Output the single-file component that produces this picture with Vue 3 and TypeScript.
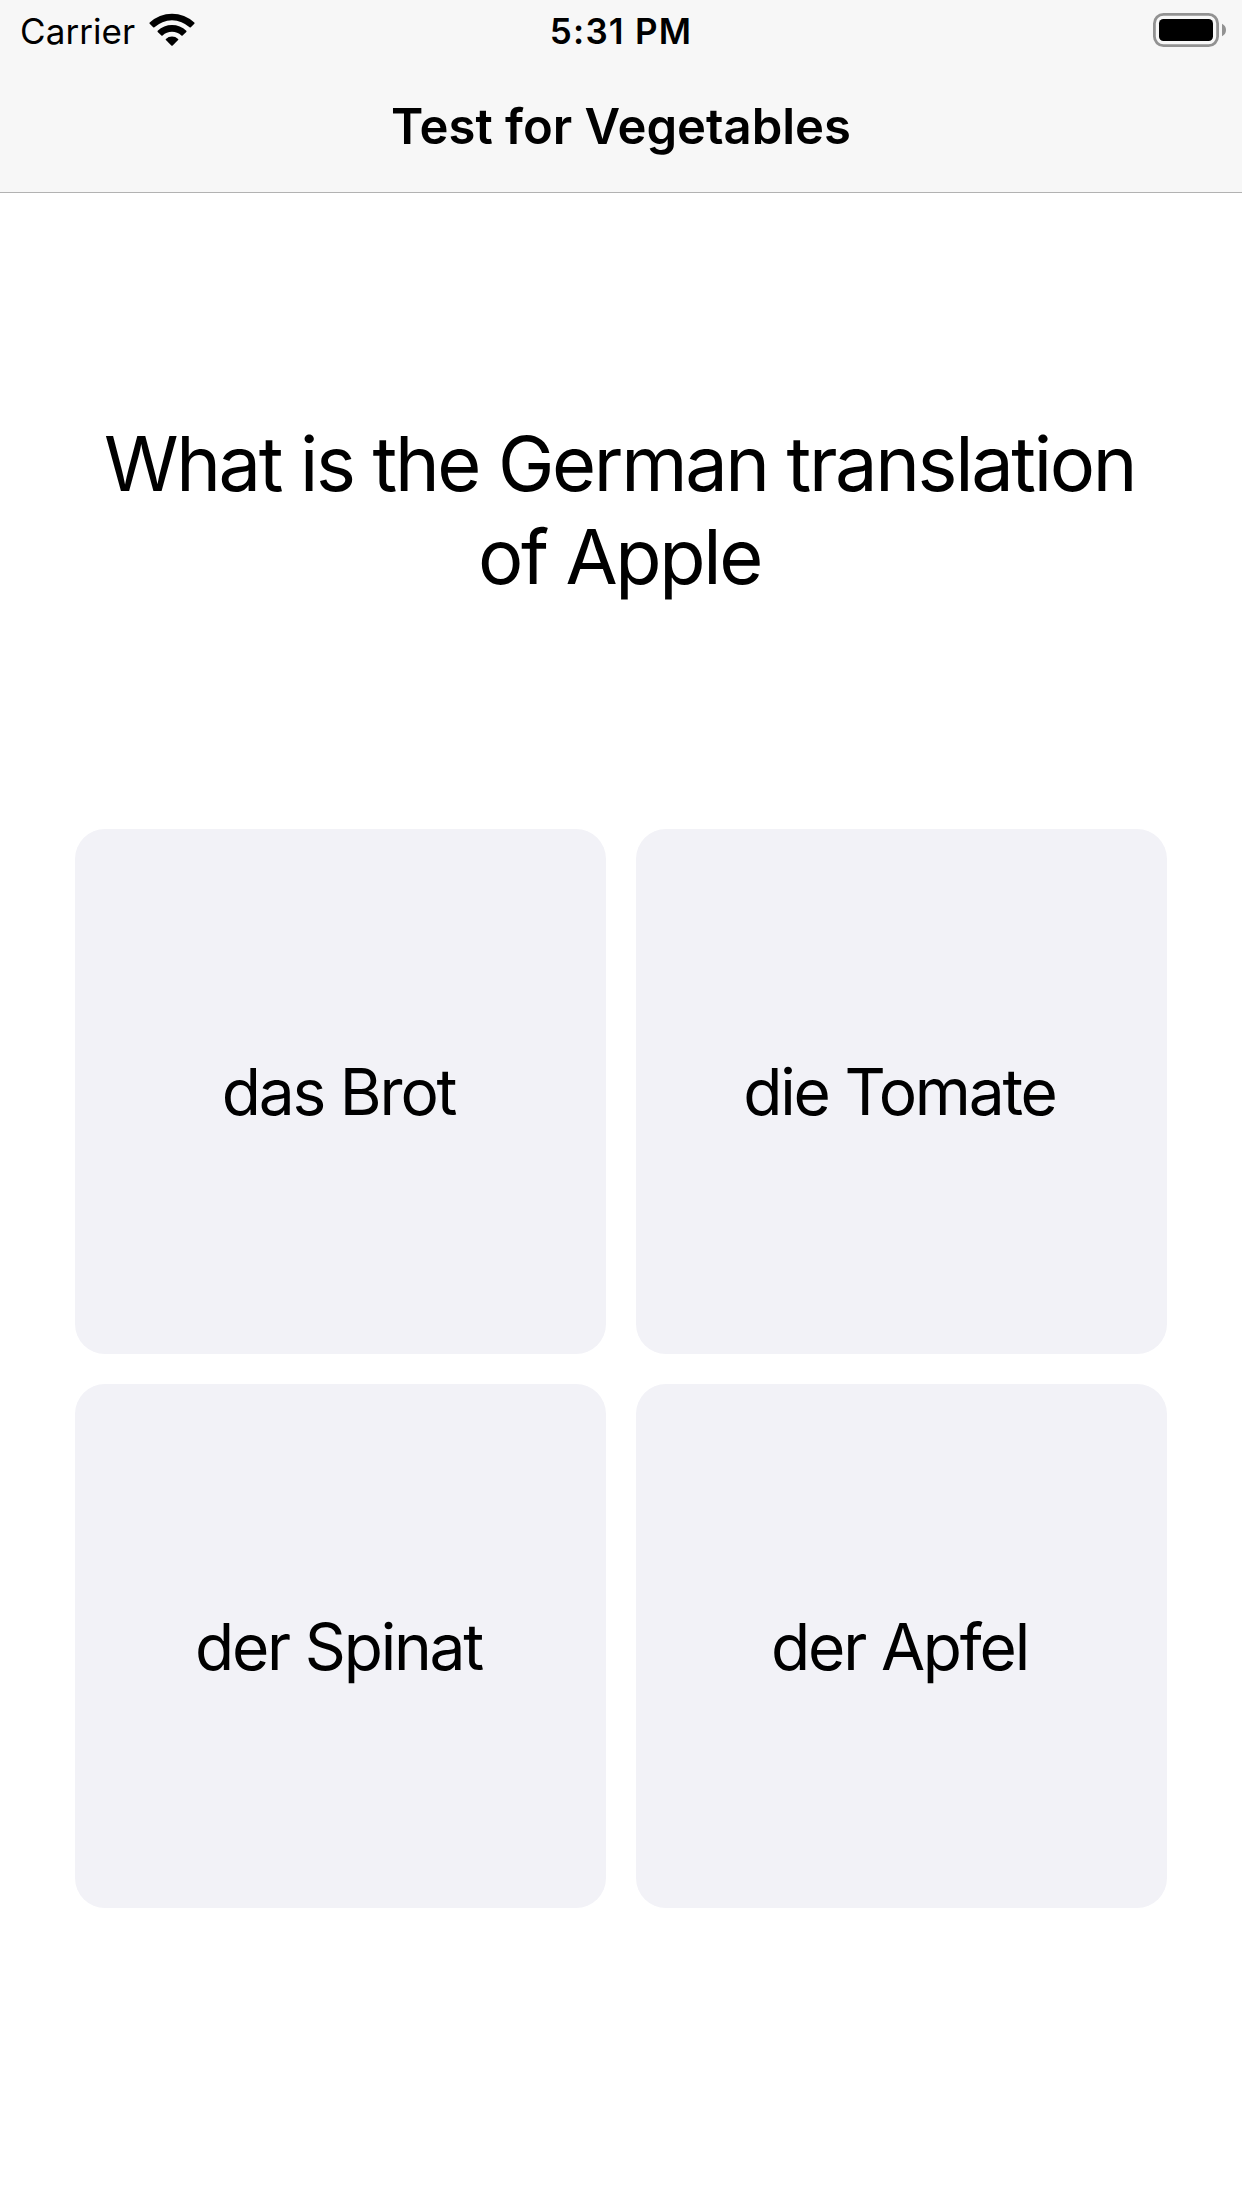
<script setup lang="ts">
interface Answer {
  id: number
  label: string
}

const carrier = 'Carrier'
const time = '5:31 PM'
const title = 'Test for Vegetables'
const question = 'What is the German translation of Apple'

const answers: Answer[] = [
  { id: 1, label: 'das Brot' },
  { id: 2, label: 'die Tomate' },
  { id: 3, label: 'der Spinat' },
  { id: 4, label: 'der Apfel' },
]
</script>

<template>
  <div class="screen">
    <header class="top">
      <div class="status-bar">
        <div class="status-left">
          <span class="carrier">{{ carrier }}</span>
          <svg class="wifi" width="46" height="34" viewBox="0 0 46 34" aria-hidden="true">
            <path d="M0.7 9.6 A32.5 32.5 0 0 1 45.3 9.6 Q45.8 10.2 45.3 10.8 L41.8 14.3 Q41.2 14.8 40.6 14.3 A25.8 25.8 0 0 0 5.4 14.3 Q4.8 14.8 4.2 14.3 L0.7 10.8 Q0.2 10.2 0.7 9.6 Z" />
            <path d="M8.7 17.7 A20.8 20.8 0 0 1 37.3 17.7 Q37.8 18.3 37.3 18.9 L33.6 22.5 Q33 23 32.4 22.5 A14 14 0 0 0 13.6 22.5 Q13 23 12.4 22.5 L8.7 18.9 Q8.2 18.3 8.7 17.7 Z" />
            <path d="M16.9 25.9 A9 9 0 0 1 29.1 25.9 Q29.6 26.5 29.1 27.1 L23.7 32.4 Q23 33 22.3 32.4 L16.9 27.1 Q16.4 26.5 16.9 25.9 Z" />
          </svg>
        </div>
        <span class="time">{{ time }}</span>
        <div class="status-right">
          <svg class="battery" width="73" height="34" viewBox="0 0 73 34" aria-hidden="true">
            <rect x="1.4" y="1.4" width="63.2" height="31.2" rx="9" fill="none" stroke="#929292" stroke-width="2.8" />
            <rect x="6" y="6" width="54" height="22" rx="4.5" />
            <path d="M69 10.8 Q73 12.8 73 17 Q73 21.2 69 23.2 Z" fill="#929292" />
          </svg>
        </div>
      </div>
      <h1 class="title">{{ title }}</h1>
    </header>

    <main class="quiz">
      <section class="question">
        <p>{{ question }}</p>
      </section>
      <section class="answers">
        <button v-for="answer in answers" :key="answer.id" class="answer" type="button">
          {{ answer.label }}
        </button>
      </section>
    </main>
  </div>
</template>

<style>
body {
  margin: 0;
  background: #fff;
}
</style>

<style scoped>
.screen {
  display: flex;
  flex-direction: column;
  width: 1242px;
  height: 2208px;
  overflow: hidden;
  background: #fff;
  color: #000;
  font-family: Inter, 'Liberation Sans', sans-serif;
}

.top {
  box-sizing: border-box;
  display: flex;
  flex-direction: column;
  height: 193px;
  background: #f7f7f7;
  border-bottom: 1px solid #b2b2b2;
}

.status-bar {
  display: grid;
  grid-template-columns: 1fr auto 1fr;
  align-items: center;
  height: 62px;
  padding: 0 16px 0 20px;
  font-size: 35px;
  line-height: 62px;
}

.status-left {
  display: flex;
  align-items: center;
  gap: 14px;
}

.carrier {
  letter-spacing: 0.08px;
}

.time {
  margin-right: 4px;
  font-weight: 560;
  letter-spacing: 1.2px;
}

.status-right {
  display: flex;
  justify-content: flex-end;
}

.wifi,
.battery {
  display: block;
  margin-bottom: 2px;
}

.title {
  margin: 0;
  font-size: 49px;
  font-weight: 600;
  line-height: 130px;
  text-align: center;
}

.quiz {
  display: flex;
  flex-direction: column;
}

.question {
  box-sizing: border-box;
  display: flex;
  align-items: center;
  justify-content: center;
  height: 636px;
  padding: 0 78px 3px 75px;
}

.question p {
  margin: 0;
  font-size: 75.7px;
  line-height: 93px;
  letter-spacing: -2.36px;
  text-align: center;
}

.answers {
  display: grid;
  grid-template-columns: repeat(2, 531px);
  grid-template-rows: 525px 524px;
  gap: 30px;
  padding: 0 75px;
}

.answer {
  display: flex;
  align-items: center;
  justify-content: center;
  margin: 0;
  padding: 0 4px 0 0;
  border: 0;
  border-radius: 30px;
  background: #f2f2f7;
  color: inherit;
  font-family: inherit;
  font-size: 64px;
  line-height: 78px;
  letter-spacing: -2.18px;
}

.answer:nth-child(n + 3) {
  padding-top: 2px;
}
</style>
